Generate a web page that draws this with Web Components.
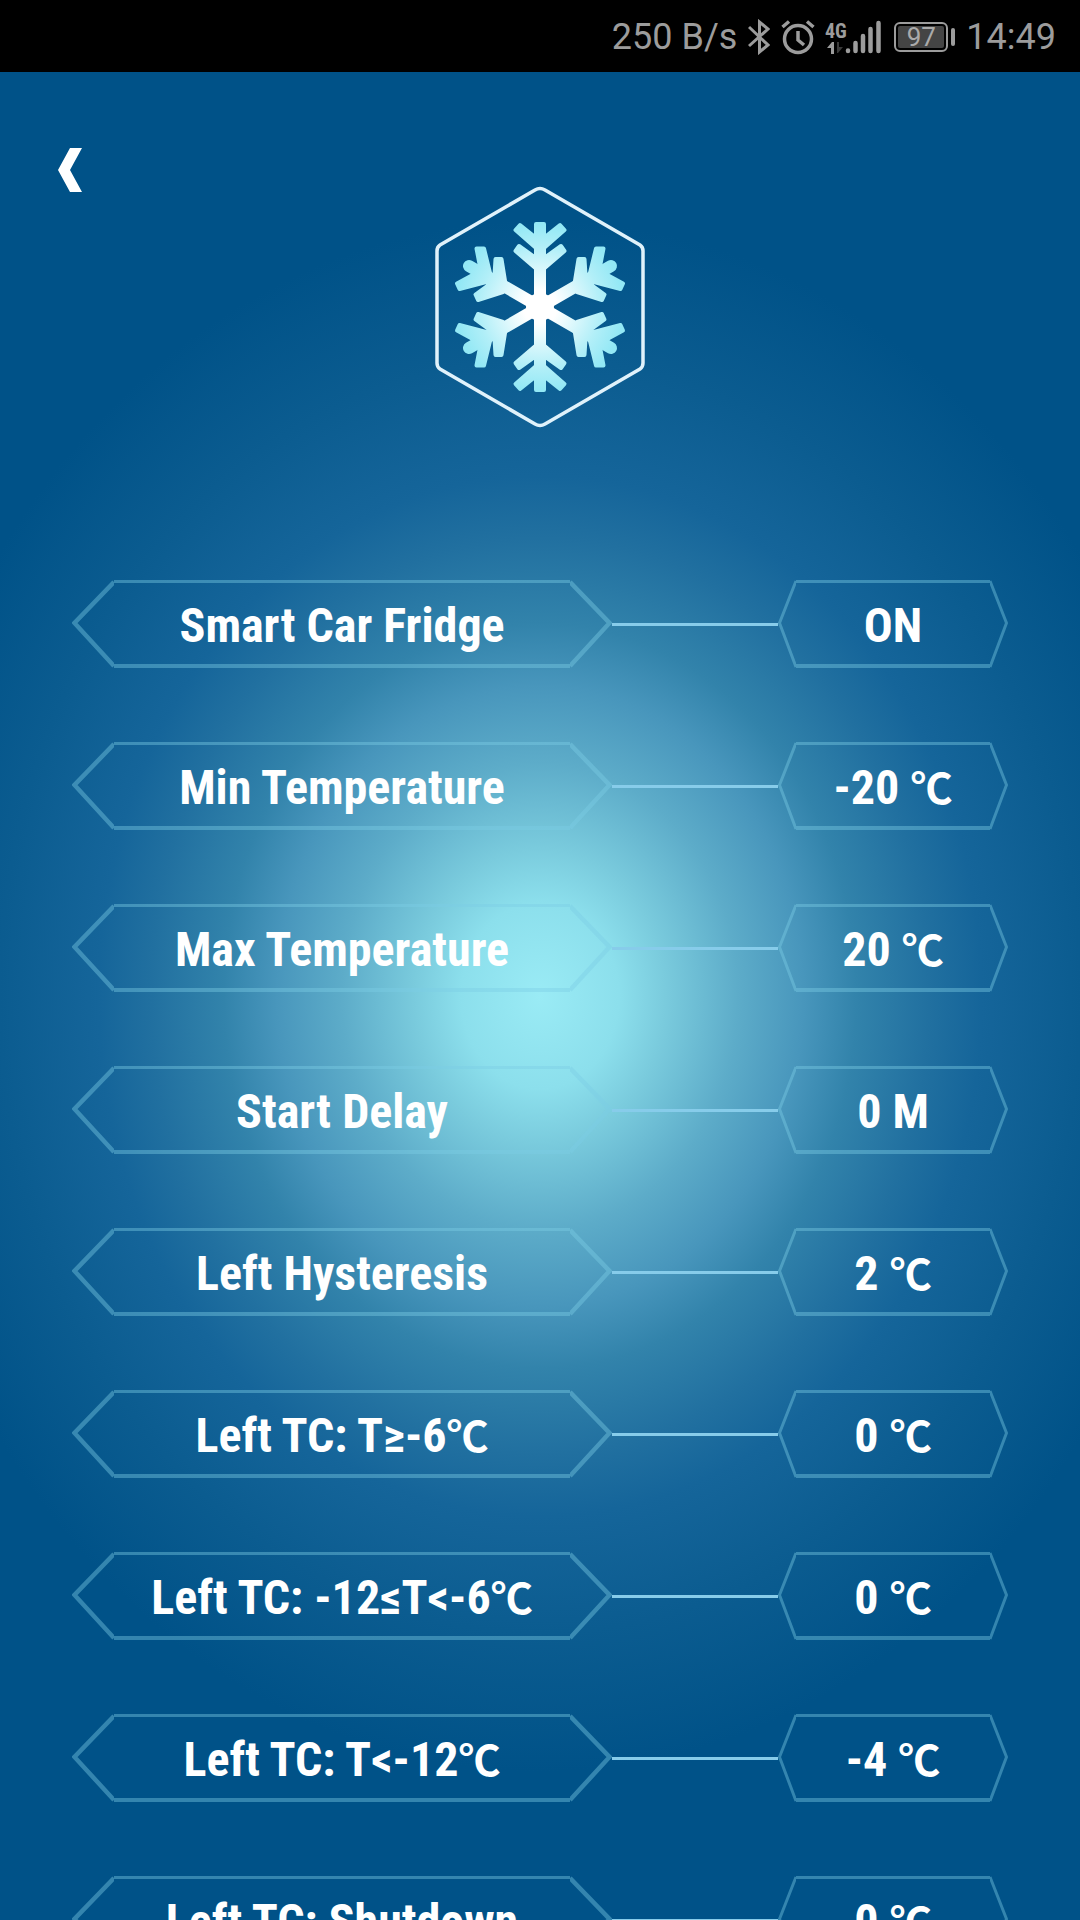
<!DOCTYPE html>
<html lang="en">
<head>
<meta charset="utf-8">
<meta name="viewport" content="width=device-width, initial-scale=1">
<title>Smart Car Fridge</title>
<style>
html, body { margin: 0; height: 100%; overflow: hidden; background: #005288; }
</style>
</head>
<body>
<fridge-app></fridge-app>

<template id="status-bar">
<style>
:host { box-sizing: border-box; display: flex; align-items: center; justify-content: flex-end; height: 72px; flex: none; padding: 2px 24px 0 0; gap: 11px; background: #000; color: #9c9c9c; font: 36px/40px Roboto, sans-serif; }
svg { display: block; flex: none; }
.battery { display: flex; align-items: center; gap: 3px; }
.cell { box-sizing: border-box; width: 54px; height: 30px; border: 2px solid #9c9c9c; border-radius: 6px; padding: 2px; }
.fill { background: #444; border-radius: 2px; font-size: 26px; line-height: 22px; text-align: center; color: #aaa; }
.tip { width: 4px; height: 18px; border-radius: 2px; background: #9c9c9c; }
.icons { display: flex; align-items: center; gap: 11px; margin-right: 2px; }
.g { font: 700 20px/20px "Roboto Condensed", Roboto, sans-serif; }
.net { display: flex; align-items: flex-end; }
.gen { display: flex; flex-direction: column; align-items: center; width: 19px; }
</style>
<span>250 B/s</span>
<span class="icons">
<svg width="22" height="36" viewBox="0 0 22 36" fill="none" stroke="#9c9c9c" stroke-width="3"><path d="M1 8 20 26 11.500 33V3L20 10 1 27"/></svg>
<svg width="34" height="36" viewBox="0 0 34 36" fill="none" stroke="#9c9c9c" stroke-width="3.500"><circle cx="17" cy="20" r="13.500"/><path d="M17 12v9l6 5M1.500 8 8 2.500M26 2.500 32.500 8"/></svg>
<span class="net">
<span class="gen"><span class="g">4G</span><svg width="19" height="14" viewBox="0 0 19 14"><path d="M1 7 6 1h2v12H5V7Z" fill="#9c9c9c"/><path d="M11 1h2v5h4l-5 6h-1Z" fill="#3a3a3a"/></svg></span>
<svg width="36" height="36" viewBox="0 0 36 36" stroke="#9c9c9c" stroke-width="4.500" stroke-linecap="round"><path d="M3 31.500v.500M10.500 24v8M18 17v15M25.500 10v22M33.500 4v28"/></svg>
</span>
</span>
<span class="battery"><span class="cell"><div class="fill">97</div></span><span class="tip"></span></span>
<span>14:49</span>
</template>

<template id="snow-emblem">
<style>
:host { display: block; width: 212px; height: 242px; }
svg { display: block; }
</style>
<svg width="212" height="242" viewBox="-106 -121 212 242" role="img" aria-label="Snowflake">
<defs>
<radialGradient id="ice" gradientUnits="userSpaceOnUse" cx="0" cy="0" r="84"><stop offset=".2" stop-color="#fff"/><stop offset=".72" stop-color="#b2eff8"/><stop offset="1" stop-color="#93e8f5"/></radialGradient>
<mask id="flake" maskUnits="userSpaceOnUse" x="-90" y="-90" width="180" height="180">
<g stroke="#fff" fill="#fff" stroke-width="4" stroke-linejoin="round">
<path id="arm" d="M-4-83H4V0H-4ZM0-66 20-82 24.500-77 0-55.500-24.500-77-20-82ZM0-46 21-61 24.500-56 0-35-24.500-56-21-61Z"/>
<use href="#arm" transform="scale(1 -1)"/>
<g id="side"><path d="M0 0 71-41" stroke-width="12" stroke-linecap="round"/><path d="M56-58.500H63.500L58-30H49ZM83-23.500 80.500-18 50-26 60-36ZM38.500-48H44.500L46-24 34-20ZM64.500-12.500 62-7 37-15 46-26Z"/></g>
<use href="#side" transform="scale(-1 1)"/><use href="#side" transform="scale(1 -1)"/><use href="#side" transform="scale(-1 -1)"/>
</g><circle r="14" fill="#fff"/>
</mask>
</defs>
<path d="M-5-117Q0-120 5-117L100-62Q103-60 103-56V56Q103 60 100 62L5 117Q0 120-5 117L-100 62Q-103 60-103 56V-56Q-103-60-100-62Z" fill="none" stroke="#e0f2fb" stroke-width="3.500"/>
<rect x="-90" y="-90" width="180" height="180" fill="url(#ice)" mask="url(#flake)"/>
</svg>
</template>

<template id="setting-row">
<style>
:host { --line: rgba(125, 205, 228, .42); display: flex; align-items: center; height: 88px; flex: none; color: #fff; }
.label, .value { display: grid; align-items: center; height: 88px; }
.label { flex: 540 1 0; }
.value { flex: 230 1 0; appearance: none; border: 0; padding: 0; margin: 0; background: none; color: inherit; }
.label > *, .value > * { grid-area: 1 / 1; }
.frame { display: flex; height: 88px; }
.frame svg { display: block; flex: none; }
.edge { flex: 1; box-sizing: border-box; border: solid var(--line); border-width: 3px 0 4px; }
.frame path { fill: none; stroke: var(--line); }
.text { font: 700 48px/56px "Roboto Condensed", "Noto Sans CJK SC", Roboto, sans-serif; text-align: center; padding-top: 4px; white-space: nowrap; }
.wire { flex: 166 1 0; height: 3px; background: #87ccea; }
</style>
<div class="label" id="name">
<div class="frame"><svg width="42" height="88" viewBox="0 0 42 88"><path stroke-width="4.500" d="M42 2 2.500 43 42 86"/></svg><div class="edge"></div><svg width="42" height="88" viewBox="0 0 42 88"><path stroke-width="4.500" d="M0 2 39.500 43 0 86"/></svg></div>
<div class="text"><slot name="label"></slot></div>
</div>
<div class="wire"></div>
<button class="value" type="button" aria-describedby="name">
<span class="frame"><svg width="18" height="88" viewBox="0 0 18 88"><path stroke-width="3" d="M18 1 1.500 43 18 87"/></svg><span class="edge"></span><svg width="18" height="88" viewBox="0 0 18 88"><path stroke-width="3" d="M0 1 16.500 43 0 87"/></svg></span>
<span class="text"><slot></slot></span>
</button>
</template>

<template id="fridge-app">
<style>
:host { display: flex; flex-direction: column; height: 100vh; overflow: hidden; }
main { flex: 1; min-height: 0; overflow: hidden; display: flex; flex-direction: column; background: radial-gradient(ellipse 61% 42% at 50% 50%, #9aebf5 0%, #8cdfec 12%, #7acbdd 19%, #5dacc9 30%, #4896bc 40%, #3283ab 48%, #2170a0 59%, #15659a 67%, #0b5c90 82%, #005288 100%); }
header { display: grid; grid-template-columns: 1fr auto 1fr; padding: 76px 56px 0; flex: none; }
button { appearance: none; border: 0; background: none; padding: 0; width: 28px; height: 44px; }
button svg { display: block; }
snow-emblem { margin-top: 38px; }
section { display: flex; flex-direction: column; gap: 74px; padding: 152px 72px 0; }
.unit { font-size: 42px; line-height: 48px; }
</style>
<status-bar></status-bar>
<main>
<header><button type="button" aria-label="Back"><svg width="28" height="44" viewBox="0 0 28 44"><path d="M14 0H26L14 22 26 44H14L2 22Z" fill="#fff"/></svg></button><snow-emblem></snow-emblem></header>
<section>
<setting-row><span slot="label">Smart Car Fridge</span>ON</setting-row>
<setting-row><span slot="label">Min Temperature</span>-20 <span class="unit">℃</span></setting-row>
<setting-row><span slot="label">Max Temperature</span>20 <span class="unit">℃</span></setting-row>
<setting-row><span slot="label">Start Delay</span>0 M</setting-row>
<setting-row><span slot="label">Left Hysteresis</span>2 <span class="unit">℃</span></setting-row>
<setting-row><span slot="label">Left TC: T≥-6<span class="unit">℃</span></span>0 <span class="unit">℃</span></setting-row>
<setting-row><span slot="label">Left TC: -12≤T&lt;-6<span class="unit">℃</span></span>0 <span class="unit">℃</span></setting-row>
<setting-row><span slot="label">Left TC: T&lt;-12<span class="unit">℃</span></span>-4 <span class="unit">℃</span></setting-row>
<setting-row><span slot="label">Left TC: Shutdown</span>0 <span class="unit">℃</span></setting-row>
</section>
</main>
</template>

<script>
class TemplateElement extends HTMLElement {
  constructor() {
    super();
    this.attachShadow({ mode: "open" });
    this.shadowRoot.append(document.getElementById(this.localName).content.cloneNode(true));
  }
}
for (const name of ["status-bar", "snow-emblem", "setting-row", "fridge-app"]) {
  customElements.define(name, class extends TemplateElement {});
}
</script>
</body>
</html>
